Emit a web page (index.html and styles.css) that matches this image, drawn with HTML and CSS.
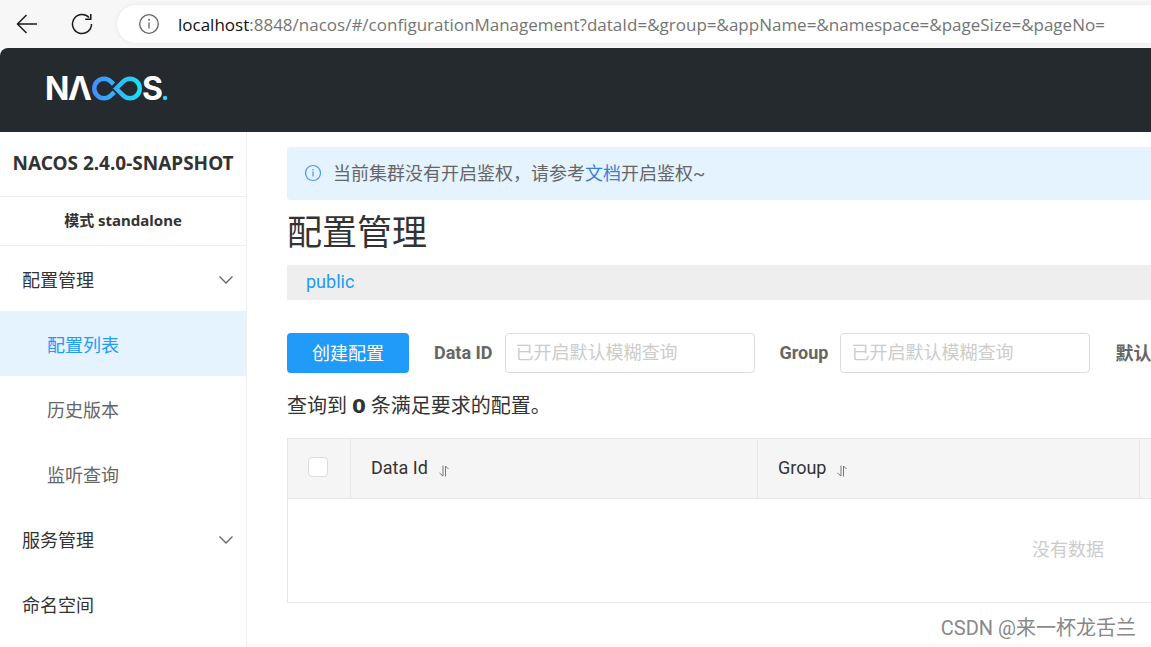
FILE: index.html
```html
<!DOCTYPE html>
<html lang="zh-CN">
<head>
<meta charset="utf-8">
<title>Nacos</title>
<link rel="stylesheet" href="styles.css">
</head>
<body>
<div class="browser-bar">
  <button class="nav-button" type="button" aria-label="Back">
    <svg width="22" height="22" viewBox="0 0 22 22"><path d="M21 11H1.500M10.500 2L1.500 11l9 9"/></svg>
  </button>
  <button class="nav-button" type="button" aria-label="Refresh">
    <svg width="22" height="22" viewBox="0 0 22 22"><path d="M20.500 11a9.500 9.500 0 1 1-2.500-6.400M19.800 1v5.200h-5.600"/></svg>
  </button>
  <div class="address">
    <svg class="address-info" width="22" height="22" viewBox="0 0 22 22"><circle cx="11" cy="11" r="9.300"/><path d="M11 9.500v6"/><circle class="dot" cx="11" cy="6.700" r="1"/></svg>
    <span class="url"><span class="url-host">localhost</span>:8848/nacos/#/configurationManagement?dataId=&amp;group=&amp;appName=&amp;namespace=&amp;pageSize=&amp;pageNo=</span>
  </div>
</div>

<header class="header">
  <svg class="logo" width="122" height="26" viewBox="0 0 122 26" role="img" aria-label="NACOS">
    <defs>
      <linearGradient id="infinity" gradientUnits="userSpaceOnUse" x1="45" y1="0" x2="95" y2="0">
        <stop offset="0" stop-color="#448dff"/>
        <stop offset="1" stop-color="#1be1f6"/>
      </linearGradient>
    </defs>
    <text x="-2" y="24">N</text>
    <text x="21" y="24">Λ</text>
    <path d="M66.500 8.200L63.900 5.600A9.750 9.750 0 1 0 63.900 19.400L67.200 16.100" stroke="url(#infinity)"/>
    <path d="M69.200 12.500L76.100 5.600A9.750 9.750 0 1 1 76.100 19.400Z" stroke="url(#infinity)"/>
    <text x="95" y="24">S</text>
    <circle cx="118" cy="22" r="2.200"/>
  </svg>
</header>

<div class="layout">
  <nav class="sidebar">
    <h1 class="version">NACOS 2.4.0-SNAPSHOT</h1>
    <div class="mode">模式 standalone</div>
    <ul class="menu">
      <li><a class="menu-item" href="#config">配置管理<svg class="chevron" width="14" height="8" viewBox="0 0 14 8"><path d="M.5.500L7 7 13.500.500"/></svg></a></li>
      <li><a class="menu-item sub active" href="#list">配置列表</a></li>
      <li><a class="menu-item sub" href="#history">历史版本</a></li>
      <li><a class="menu-item sub" href="#listen">监听查询</a></li>
      <li><a class="menu-item" href="#service">服务管理<svg class="chevron" width="14" height="8" viewBox="0 0 14 8"><path d="M.5.500L7 7 13.500.500"/></svg></a></li>
      <li><a class="menu-item" href="#namespace">命名空间</a></li>
    </ul>
  </nav>

  <main class="main">
    <div class="content">
      <div class="notice">
        <svg width="18" height="18" viewBox="0 0 18 18"><circle cx="9" cy="9" r="7.500"/><path d="M9 5v1.500M9 7.500v5"/></svg>
        <span>当前集群没有开启鉴权，请参考<a href="#docs">文档</a>开启鉴权~</span>
      </div>
      <h2 class="title">配置管理</h2>
      <div class="namespaces"><a href="#public">public</a></div>
      <form class="filters">
        <button class="create" type="button">创建配置</button>
        <div class="field">
          <label for="data-id">Data ID</label>
          <input id="data-id" type="text" placeholder="已开启默认模糊查询">
        </div>
        <div class="field">
          <label for="group">Group</label>
          <input id="group" type="text" placeholder="已开启默认模糊查询">
        </div>
        <span class="match">默认</span>
      </form>
      <p class="count">查询到 <strong>0</strong> 条满足要求的配置。</p>
      <table class="table">
        <colgroup><col class="col-check"><col class="col-id"><col class="col-group"><col></colgroup>
        <thead>
          <tr>
            <th class="check"><input type="checkbox" aria-label="全选"></th>
            <th>Data Id<svg class="sort" width="10" height="12" viewBox="0 0 10 12"><path d="M4 .5V11L.5 8M6.500 11.500V1L9.500 4"/></svg></th>
            <th>Group<svg class="sort" width="10" height="12" viewBox="0 0 10 12"><path d="M4 .5V11L.5 8M6.500 11.500V1L9.500 4"/></svg></th>
            <th></th>
          </tr>
        </thead>
        <tbody>
          <tr><td class="empty" colspan="4">没有数据</td></tr>
        </tbody>
      </table>
    </div>
    <div class="bottom-strip"></div>
  </main>
</div>
<div class="watermark">CSDN @来一杯龙舌兰</div>
</body>
</html>
```
FILE: styles.css
```css
* { box-sizing: border-box; }

body {
  margin: 0;
  height: 100vh;
  display: flex;
  flex-direction: column;
  overflow: hidden;
  background: #fff;
  color: #333;
  font-family: Roboto, "Noto Sans CJK SC", sans-serif;
  font-size: 18px;
}

a { color: inherit; text-decoration: none; }
svg { fill: none; flex: none; }

.browser-bar {
  display: flex;
  align-items: center;
  gap: 33px;
  height: 48px;
  padding-left: 16px;
  background: #f7f7f7;
  flex: none;
}
.nav-button {
  display: flex;
  padding: 0;
  border: 0;
  background: none;
}
.nav-button svg { stroke: #1a1a1a; stroke-width: 1.5; }
.address {
  display: flex;
  align-items: center;
  gap: 18px;
  flex: 1;
  min-width: 0;
  height: 38px;
  margin-left: -9px;
  padding-left: 21px;
  border-radius: 19px 0 0 19px;
  background: #fff;
  box-shadow: 0 0 4px #e4e4e4;
}
.address-info { stroke: #666; stroke-width: 1.3; }
.address-info .dot { fill: #666; stroke: none; }
.url {
  color: #757575;
  font-family: "Open Sans", sans-serif;
  font-size: 17px;
  white-space: nowrap;
}
.url-host { color: #111; }

.header {
  display: flex;
  align-items: center;
  flex: none;
  height: 84px;
  padding: 0 47px 2px;
  border-radius: 8px 0 0 0;
  background: #252a2f;
}
.logo { overflow: visible; }
.logo text {
  fill: #fff;
  font: 700 32px Inter, sans-serif;
}
.logo path { stroke-width: 4.5; }
.logo circle { fill: #1be1f6; }

.layout {
  display: flex;
  flex: 1;
  min-height: 0;
}
.sidebar {
  flex: none;
  width: 247px;
  border-right: 1px solid #eee;
}
.version, .mode {
  margin: 0;
  padding-bottom: 2px;
  border-bottom: 1px solid #eee;
  font-family: "Noto Sans", "Noto Sans CJK SC", sans-serif;
  font-weight: 700;
  text-align: center;
  white-space: nowrap;
}
.version { font-size: 19px; line-height: 62px; }
.mode { font-size: 15px; line-height: 46px; }
.menu { margin: 0; padding: 0; list-style: none; }
.menu-item {
  display: flex;
  align-items: center;
  justify-content: space-between;
  height: 65px;
  padding: 0 13px 0 22px;
}
.menu-item.sub { padding-left: 47px; color: #666; }
.menu-item.active { background: #e4f3fe; color: #209bfa; }
.chevron { margin-top: 2px; stroke: #666; stroke-width: 1.3; }

.main {
  display: flex;
  flex-direction: column;
  justify-content: space-between;
  flex: 1;
  min-width: 0;
  overflow: hidden;
}
.content { padding: 15px 0 0 40px; }
.notice {
  display: flex;
  align-items: center;
  gap: 11px;
  height: 53px;
  padding: 0 0 3px 17px;
  border-radius: 4px 0 0 4px;
  background: #e4f3fe;
  color: #666;
}
.notice svg { margin-top: 2px; stroke: #4c93f8; stroke-width: 1.2; }
.notice a { color: #3a7fd5; }
.title {
  margin: 0;
  padding-top: 2px;
  font-size: 35px;
  font-weight: 400;
  line-height: 63px;
}
.namespaces {
  height: 35px;
  padding-left: 19px;
  background: #eee;
  color: #209bfa;
  line-height: 34px;
}
.filters {
  display: flex;
  align-items: center;
  gap: 25px;
  margin-top: 33px;
  white-space: nowrap;
}
.create {
  flex: none;
  width: 122px;
  height: 40px;
  padding: 0 0 2px;
  border: 0;
  border-radius: 4px;
  background: #209bfa;
  color: #fff;
  font: inherit;
}
.field { display: flex; align-items: center; gap: 12px; }
.field label, .match { padding-bottom: 2px; color: #666; font-weight: 700; }
.field input {
  width: 250px;
  height: 40px;
  padding: 0 10px 2px;
  border: 1px solid #dcdcdc;
  border-radius: 4px;
  background: #fff;
  font: inherit;
}
.field input::placeholder { color: #ccc; }
.count {
  margin: 0;
  padding-top: 1px;
  font-size: 20px;
  line-height: 64px;
}
.count strong { font-family: "DejaVu Sans", sans-serif; line-height: 1; }

.table {
  width: 1562px;
  border-collapse: collapse;
  table-layout: fixed;
}
.col-check { width: 63px; }
.col-id { width: 407px; }
.col-group { width: 382px; }
.table th, .table td { border: 1px solid #e6e6e6; }
.table th {
  height: 60px;
  padding: 0 20px 3px;
  background: #f5f5f5;
  font-weight: 400;
  text-align: left;
}
.table .check { padding: 0 2px 5px 0; text-align: center; }
.check input {
  appearance: none;
  width: 20px;
  height: 20px;
  margin: 0;
  border: 1px solid #dcdcdc;
  border-radius: 4px;
  background: #fff;
  vertical-align: middle;
}
.sort {
  margin-left: 11px;
  vertical-align: -3px;
  stroke: #777;
}
.table .empty {
  height: 104px;
  padding: 0 0 5px;
  color: #ccc;
  text-align: center;
}
.bottom-strip { height: 4px; background: #fafafa; }

.watermark {
  position: absolute;
  right: 15px;
  bottom: 6px;
  color: #888;
  font-size: 20px;
  text-shadow: 1px 1px 0 #fff;
}
```
